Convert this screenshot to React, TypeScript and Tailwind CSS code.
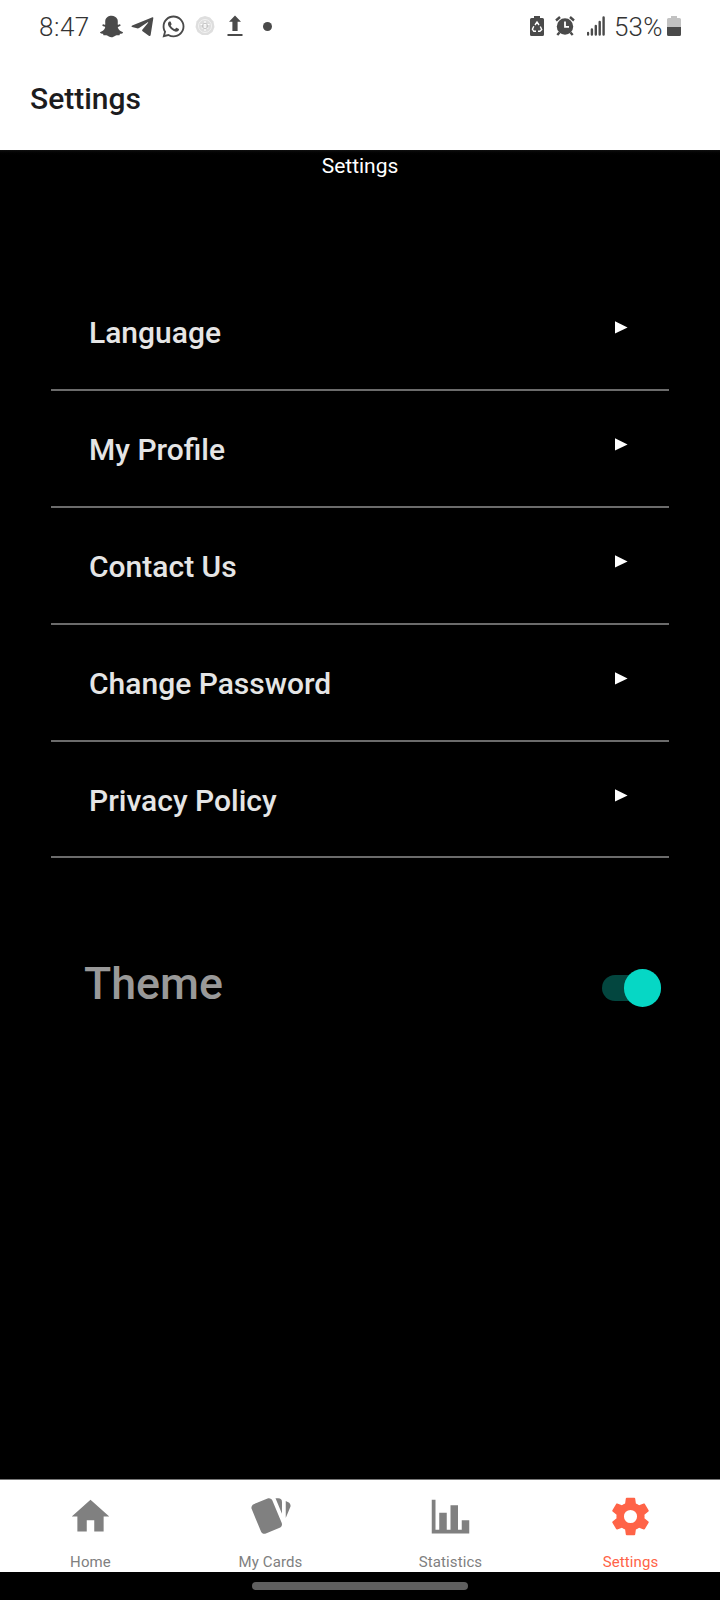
import type { ReactNode } from "react";
import { FaSnapchatGhost, FaWhatsapp } from "react-icons/fa";

const ROWS = ["Language", "My Profile", "Contact Us", "Change Password", "Privacy Policy"];

const TABS = [
  { label: "Home", path: "M10,20V14H14V20H19V12H22L12,3L2,12H5V20H10Z" },
  {
    label: "My Cards",
    path: "M21.47,4.35L20.13,3.79V12.82L22.56,6.96C22.97,5.94 22.5,4.77 21.47,4.35M1.97,8.05L6.93,20C7.24,20.77 7.97,21.24 8.74,21.26C9,21.26 9.27,21.21 9.53,21.1L16.9,18.05C17.65,17.74 18.11,17 18.13,16.26C18.14,16 18.09,15.71 18,15.45L13,3.5C12.71,2.73 11.97,2.26 11.19,2.25C10.93,2.25 10.67,2.31 10.42,2.4L3.06,5.45C2.04,5.87 1.55,7.04 1.97,8.05M18.12,4.25A2,2 0 0,0 16.12,2.25H14.67L18.12,10.59",
  },
  { label: "Statistics", path: "M22,21H2V3H4V19H6V10H10V19H12V6H16V19H18V14H22V21Z" },
  {
    label: "Settings",
    active: true,
    path: "M12,15.5A3.5,3.5 0 0,1 8.5,12A3.5,3.5 0 0,1 12,8.5A3.5,3.5 0 0,1 15.5,12A3.5,3.5 0 0,1 12,15.5M19.43,12.97C19.47,12.65 19.5,12.33 19.5,12C19.5,11.67 19.47,11.34 19.43,11L21.54,9.37C21.73,9.22 21.78,8.95 21.66,8.73L19.66,5.27C19.54,5.05 19.27,4.96 19.05,5.05L16.56,6.05C16.04,5.66 15.5,5.32 14.87,5.07L14.5,2.42C14.46,2.18 14.25,2 14,2H10C9.75,2 9.54,2.18 9.5,2.42L9.13,5.07C8.5,5.32 7.96,5.66 7.44,6.05L4.95,5.05C4.73,4.96 4.46,5.05 4.34,5.27L2.34,8.73C2.21,8.95 2.27,9.22 2.46,9.37L4.57,11C4.53,11.34 4.5,11.67 4.5,12C4.5,12.33 4.53,12.65 4.57,12.97L2.46,14.63C2.27,14.78 2.21,15.05 2.34,15.27L4.34,18.73C4.46,18.95 4.73,19.03 4.95,18.95L7.44,17.94C7.96,18.34 8.5,18.68 9.13,18.93L9.5,21.58C9.54,21.82 9.75,22 10,22H14C14.25,22 14.46,21.82 14.5,21.58L14.87,18.93C15.5,18.67 16.04,18.34 16.56,17.94L19.05,18.95C19.27,19.03 19.54,18.95 19.66,18.73L21.66,15.27C21.78,15.05 21.73,14.78 21.54,14.63L19.43,12.97Z",
  },
];

function Glyph({ w, h, className, children }: { w: number; h: number; className?: string; children: ReactNode }) {
  return (
    <svg width={w} height={h} viewBox={`0 0 ${w} ${h}`} className={className} fill="currentColor">
      {children}
    </svg>
  );
}

function StatusBar() {
  return (
    <div className="flex h-[52px] items-center justify-between pr-[39px] pl-[39px] text-[#4a4a4a]">
      <div className="flex items-center">
        <span className="w-[50px] pt-[1px] text-[26px] leading-[52px] font-light tracking-[0.5px] text-[#333]">8:47</span>
        <FaSnapchatGhost size={23} className="ml-[11px]" />
        <Glyph w={23} h={20} className="ml-[8px] mt-[2px]">
          <path d="M21.500 0.300Q22.500 0 22.300 1.300L19.700 17.800Q19.400 19.600 17.800 18.700L11.600 14.200Q10.600 13.400 11.500 12.400L17.300 5.500Q17.200 5 16.700 5.300L8.100 11Q7.100 11.600 6 11.300L1.100 9.900Q-0.400 9.300 1.200 8.500z" />
        </Glyph>
        <FaWhatsapp size={25} className="ml-[7px]" />
        <Glyph w={20} h={22} className="ml-[9px] text-[#dedede]">
          <path d="M10 1l5 1.500 3.500 4L19.500 12l-2 5-4.500 3H7l-4.500-3-2-5L1.500 6.500 5 2.500z" />
          <circle cx="10" cy="11" r="6.500" fill="none" stroke="#f2f2f2" strokeWidth="1" />
          <path d="M10 6v10M5.500 9.500h9M6.500 13h7" fill="none" stroke="#fff" strokeWidth="1.200" />
          <circle cx="10" cy="11" r="2.600" fill="none" stroke="#c4c4c4" strokeWidth="1" />
        </Glyph>
        <Glyph w={16} h={22} className="ml-[12px]">
          <path d="M8 0.500L14 6.800H10.600V16H5.400V6.800H2zM0.500 19h15v2H0.500z" />
        </Glyph>
        <span className="ml-[20px] size-[9px] rounded-full bg-current" />
      </div>
      <div className="flex items-center">
        <Glyph w={14} h={22}>
          <path d="M4 1h6v2h2.500A1.500 1.500 0 0 1 14 4.500v15a1.500 1.500 0 0 1-1.500 1.500h-11A1.500 1.500 0 0 1 0 19.500v-15A1.500 1.500 0 0 1 1.500 3H4z" />
          <path d="M5 10L7 7l2 3M10.300 11.500l1.400 3-1.800 1.800H8M6 16.300H3.800L2.400 14.300l1.400-3" fill="none" stroke="#fff" strokeWidth="1.400" />
        </Glyph>
        <Glyph w={20} h={22} className="ml-[11px]">
          <circle cx="10" cy="11.500" r="8.200" />
          <path d="M1 5.500L5 2M19 5.500L15 2M4.500 17.500L2.300 20M15.500 17.500l2.200 2.500" fill="none" stroke="currentColor" strokeWidth="2.400" />
          <path d="M10 6.500v5.300h4" fill="none" stroke="#fff" strokeWidth="1.800" />
        </Glyph>
        <Glyph w={18} h={20} className="ml-[12px]">
          <path d="M1 17v1.500M4.900 13.500v5M8.800 10v8.500M12.700 6v12.500M16.600 1.500v17" fill="none" stroke="currentColor" strokeWidth="2.400" strokeLinecap="round" />
        </Glyph>
        <span className="ml-[9px] w-[48px] pt-[1px] text-[26px] leading-[52px] font-light tracking-[0.2px] whitespace-nowrap text-[#333]">53%</span>
        <Glyph w={14} h={22} className="ml-[5px]">
          <path d="M4 1h6v2h2.500A1.500 1.500 0 0 1 14 4.500V12H0V4.500A1.500 1.500 0 0 1 1.500 3H4z" fill="#c2c2c2" />
          <path d="M0 12h14v7.500a1.500 1.500 0 0 1-1.500 1.500h-11A1.500 1.500 0 0 1 0 19.500z" />
        </Glyph>
      </div>
    </div>
  );
}

export default function App() {
  return (
    <div className="flex h-[1600px] w-[720px] flex-col bg-black font-[Roboto,sans-serif]">
      <div className="h-[150px] bg-white">
        <StatusBar />
        <h1 className="pl-[30px] text-[30px] leading-[93px] font-medium text-[#1c1c1e]">Settings</h1>
      </div>

      <main className="flex flex-1 flex-col bg-linear-to-b from-[#111] to-black to-[6px]">
        <p className="pt-px text-center text-[21px] leading-[31px] text-white">Settings</p>
        <ul className="mt-[92px] px-[51px]">
          {ROWS.map((row) => (
            <li key={row} className="flex h-[117px] items-center justify-between border-b-2 border-[#6b6b6b] pr-[41px] pl-[38px] last:h-[116px] last:pt-px">
              <span className="pt-[2px] text-[30px] leading-[36px] font-medium text-[#e5e5e5]">{row}</span>
              <svg width="13" height="13" viewBox="0 0 13 13" className="mb-[8px] fill-white">
                <path d="M0 0.300L12.600 6.500 0 12.600z" />
              </svg>
            </li>
          ))}
        </ul>
        <div className="mt-[89px] flex h-[80px] items-center justify-between pr-[59px] pl-[84px]">
          <span className="pb-[6px] text-[44.700px] leading-[72px] font-medium text-[#999]">Theme</span>
          <button className="mt-[2px] flex h-[26px] w-[59px] items-center justify-end rounded-full bg-[#03463f]">
            <span className="size-[37.500px] shrink-0 rounded-full bg-[#06d7c5]" />
          </button>
        </div>
      </main>

      <nav className="grid h-[93px] grid-cols-4 border-t border-[#777] bg-white">
        {TABS.map((tab) => (
          <div key={tab.label} className={`flex flex-col items-center pt-[13.500px] pl-px ${tab.active ? "text-[#ff6347]" : "text-[#808080]"}`}>
            <svg width="45" height="45" viewBox="0 0 24 24" fill="currentColor">
              <path d={tab.path} />
            </svg>
            <span className="mt-[13.500px] text-[15px] leading-[20px] tracking-[0.1px]">{tab.label}</span>
          </div>
        ))}
      </nav>
      <div className="flex h-[28px] items-center justify-center bg-black">
        <div className="h-[8px] w-[216px] rounded-full bg-[#5f5f5f]" />
      </div>
    </div>
  );
}
